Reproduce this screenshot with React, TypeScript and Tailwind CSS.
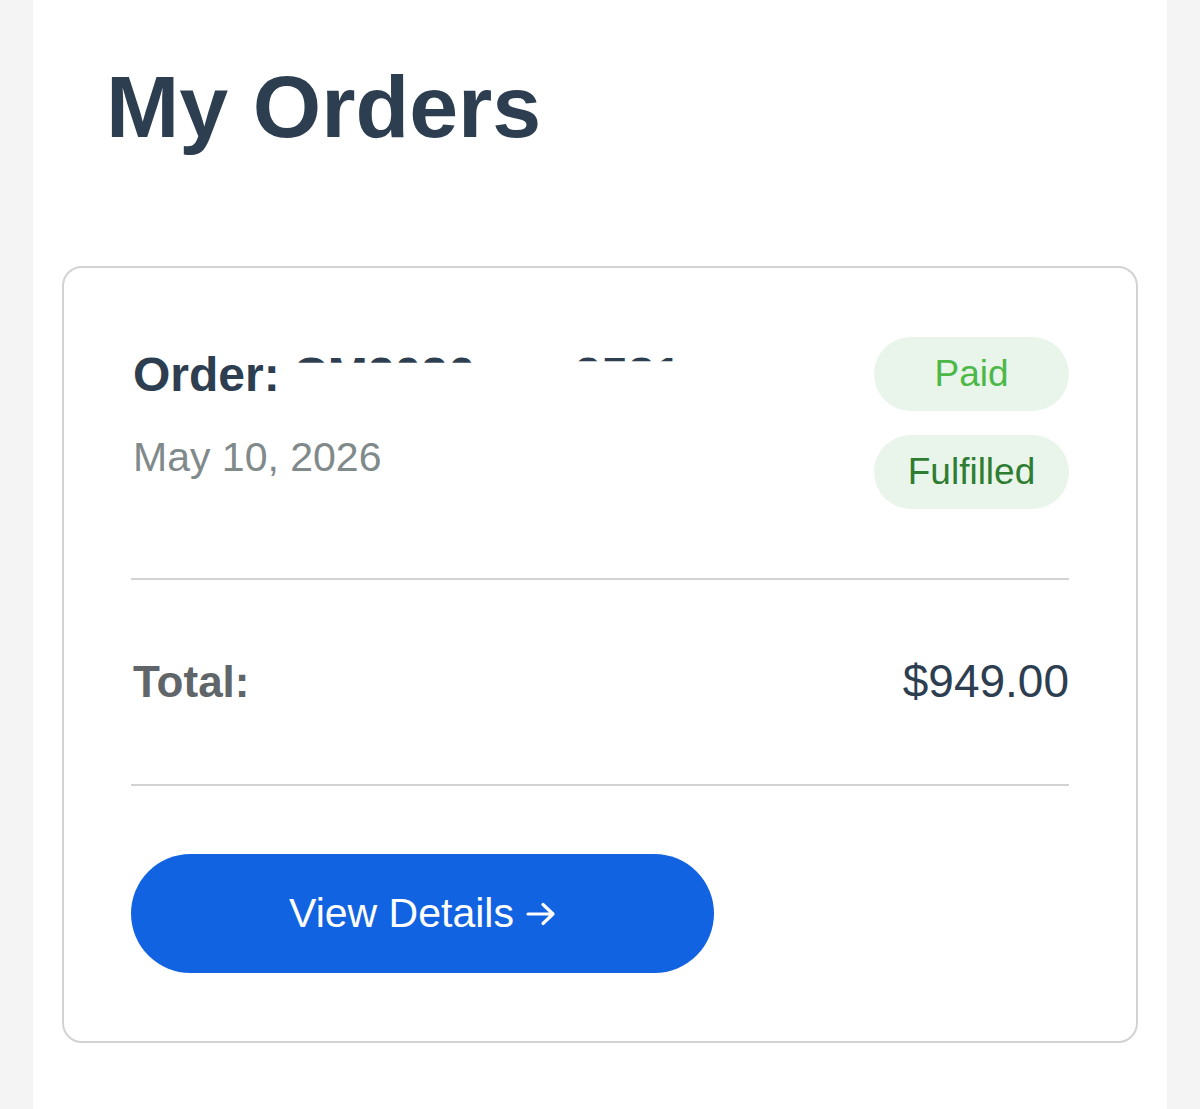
import React from 'react';

const font = { fontFamily: '"Liberation Sans", Arial, sans-serif' };

const Badge: React.FC<{ label: string; tone: string }> = ({ label, tone }) => (
  <div className={`flex h-[74px] w-[195px] items-center justify-center rounded-full bg-[#e9f5ea] text-[37px] ${tone}`}>
    {label}
  </div>
);

const ArrowIcon = () => (
  <svg width="30" height="24" viewBox="0 0 30 24" fill="none" stroke="currentColor" strokeWidth="3.2" strokeLinecap="round" strokeLinejoin="round">
    <path d="M2 12h25M17 2.5l10 9.5-10 9.5" />
  </svg>
);

export default function App() {
  return (
    <div className="min-h-screen bg-[#f4f4f4] px-[33px] font-['Liberation_Sans',Arial,sans-serif]" style={font}>
      <div className="bg-white px-[29px] pb-[80px]">
        {/* Heading */}
        <h1 className="pl-[44px] pt-[57px] text-[88px] font-bold leading-[100px] text-[#2c3e50]">My Orders</h1>

        {/* Order card */}
        <div className="mt-[109px] rounded-[20px] border-2 border-[#d2d2d2] px-[67px] pb-[68px] pt-[69px]">
          <div className="flex items-start justify-between">
            <div className="pl-[2px]">
              <div className="mt-[10px] text-[48px] font-bold leading-[56px] text-[#2c3e50]">
                Order:{' '}
                <span className="[clip-path:inset(0_0_72%_0)]">CM2026</span>
                <span className="ml-[100px] [clip-path:inset(0_0_75%_0)]">2581</span>
              </div>
              <div className="mt-[29px] text-[41px] leading-[50px] text-[#808a8b]">May 10, 2026</div>
            </div>
            <div className="flex flex-col gap-[24px]">
              <Badge label="Paid" tone="text-[#4cb847]" />
              <Badge label="Fulfilled" tone="text-[#2e7d32]" />
            </div>
          </div>

          <div className="mt-[69px] border-t-2 border-[#d2d2d2]" />

          <div className="flex items-baseline justify-between pb-[74px] pl-[2px] pt-[73px] leading-[56px]">
            <span className="text-[44px] font-bold text-[#5f6569]">Total:</span>
            <span className="text-[46px] text-[#2c3e50]">$949.00</span>
          </div>

          <div className="border-t-2 border-[#d2d2d2]" />

          <button className="mt-[68px] flex h-[119px] w-[583px] items-center justify-center gap-[12px] rounded-full bg-[#1263e1] text-[41px] text-white">
            <span>View Details</span>
            <ArrowIcon />
          </button>
        </div>
      </div>
    </div>
  );
}
